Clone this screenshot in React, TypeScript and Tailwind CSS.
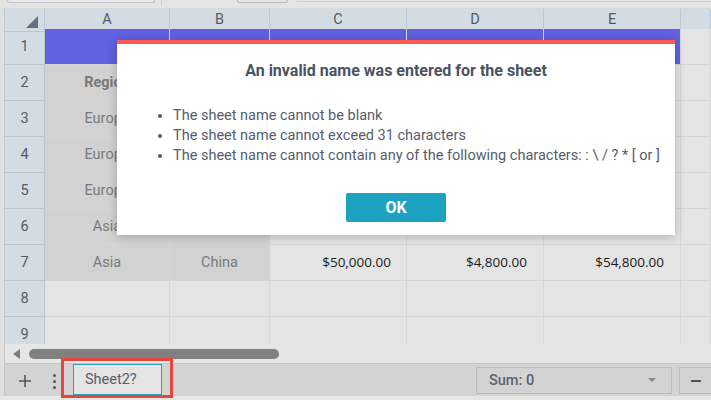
import React from "react";

const cols = ["A", "B", "C", "D", "E", ""];

type Cell = { t?: string; cls?: string; num?: boolean };

const rows: Cell[][] = [
  [{}, {}, {}, {}, {}, {}],
  [{ t: "Region", cls: "font-bold text-[#7a7a7a] justify-center" }, {}, {}, {}, {}, {}],
  [{ t: "Europe", cls: "text-[#7a7a7a] justify-center" }, {}, {}, {}, {}, {}],
  [{ t: "Europe", cls: "text-[#7a7a7a] justify-center" }, {}, {}, {}, {}, {}],
  [{ t: "Europe", cls: "text-[#7a7a7a] justify-center" }, {}, {}, {}, {}, {}],
  [{ t: "Asia", cls: "text-[#7a7a7a] justify-center" }, {}, {}, {}, {}, {}],
  [
    { t: "Asia", cls: "text-[#7a7a7a] justify-center" },
    { t: "China", cls: "text-[#7a7a7a] justify-center" },
    { t: "$50,000.00", cls: "justify-end pr-[15px] text-[#1a1a1a]", num: true },
    { t: "$4,800.00", cls: "justify-end pr-[16px] text-[#1a1a1a]", num: true },
    { t: "$54,800.00", cls: "justify-end pr-[16px] text-[#1a1a1a]", num: true },
    {},
  ],
  [{}, {}, {}, {}, {}, {}],
  [{}, {}, {}, {}, {}, {}],
];

function cellBg(r: number, c: number) {
  if (r === 0 && c < 5) return "bg-[#6161e1]";
  if (r >= 1 && r <= 6 && c < 2) return "bg-[#d2d2d2]";
  return "bg-[#e4e4e4]";
}

export default function App() {
  return (
    <div
      className="relative w-[711px] h-[400px] overflow-hidden bg-[#e4e4e4] text-[14.5px]"
      style={{ fontFamily: "Roboto, 'Noto Sans', sans-serif" }}
    >
      {/* top strip (formula bar remnants) */}
      <div className="h-[8px] flex items-start bg-[#e4e4e4]">
        <div className="ml-[7px] w-[148px] h-[3px] border-b border-x border-[#c4c4cc] rounded-b-[3px] bg-[#e8e8e8]" />
        <div className="ml-[6px] w-px h-[6px] bg-[#cfcfcf]" />
        <div className="ml-[75px] w-[51px] h-[3px] border-b border-x border-[#bdbdbd] rounded-b-[3px]" />
        <div className="ml-[9px] flex-1 h-[2px] border-b border-[#d0d0d0]" />
      </div>

      <div className="flex">
        <div className="w-[5px] bg-[#e0e0e0] border-r border-[#c9c9c9]" />
        <div className="flex-1 min-w-0">
          {/* column header */}
          <div className="grid grid-cols-[40px_125px_100px_137px_137px_137px_1fr] h-[21px] border-t border-[#d8d8d8]">
            <div className="relative bg-[#d3dce3] border-r border-b border-[#b8c9d4]">
              <svg className="absolute right-[6px] bottom-[3px]" width="12" height="12" viewBox="0 0 12 12">
                <polygon points="12,0 12,12 0,12" fill="#66707a" />
              </svg>
            </div>
            {cols.map((c, i) => (
              <div
                key={i}
                className="bg-[#d3dce3] border-r border-b border-[#b8c9d4] flex items-center justify-center text-[#555b63] text-[14.5px]"
              >
                {c}
              </div>
            ))}
          </div>
          {/* body */}
          <div className="h-[315px] overflow-hidden">
            {rows.map((row, r) => (
              <div key={r} className="grid grid-cols-[40px_125px_100px_137px_137px_137px_1fr] h-[36px]">
                <div className="bg-[#d3dce3] border-r border-b border-[#b8c9d4] flex items-center justify-center text-[#555b63]">
                  {r + 1}
                </div>
                {row.map((cell, c) => (
                  <div
                    key={c}
                    className={`${cellBg(r, c)} border-r border-b border-[#d6d6d6] flex items-center overflow-hidden whitespace-nowrap ${cell.cls ?? ""}`}
                    style={
                      cell.num
                        ? { fontFamily: "'Open Sans', 'DejaVu Sans', sans-serif", fontSize: "13.5px" }
                        : undefined
                    }
                  >
                    {cell.t}
                  </div>
                ))}
              </div>
            ))}
          </div>
          {/* scrollbar */}
          <div className="h-[19px] bg-[#e6e6e6] flex items-center">
            <svg className="ml-[8px]" width="7" height="10" viewBox="0 0 7 10">
              <polygon points="7,0 7,10 0,5" fill="#7b7b7b" />
            </svg>
            <div className="ml-[9px] w-[250px] h-[10px] rounded-full bg-[#808080]" />
          </div>
          {/* bottom bar */}
          <div className="h-[33px] bg-[#d3d3d3] border-t border-[#c6c6c6] flex items-start">
            <svg className="ml-[14px] mt-[11px]" width="12" height="12" viewBox="0 0 12 12">
              <path d="M6 0 V12 M0 6 H12" stroke="#555" strokeWidth="1.6" />
            </svg>
            <div className="ml-[22px] mt-[10px] flex flex-col gap-[3px]">
              <div className="w-[3px] h-[3px] rounded-full bg-[#555]" />
              <div className="w-[3px] h-[3px] rounded-full bg-[#555]" />
              <div className="w-[3px] h-[3px] rounded-full bg-[#555]" />
            </div>
            <div className="ml-[17px] relative w-[89px] h-[31px] border border-[#2a9fb7] bg-[#e4e4e4] flex items-center pl-[11px] text-[#555e6b] text-[14.5px]">
              Sheet2?
              <div className="absolute -left-[13px] -right-[12px] -top-[7px] -bottom-[4px] border-[3px] border-[#e6473d]" />
            </div>
            <div className="ml-auto mr-[7px] mt-[3px] w-[196px] h-[27px] border border-[#bcbcbc] bg-[#d3d3d3] flex items-center px-[12px] text-[#5a6270]">
              <span className="font-medium">Sum: 0</span>
              <svg className="ml-auto mr-[3px]" width="8" height="5" viewBox="0 0 8 5">
                <polygon points="0,0 8,0 4,4" fill="#888" />
              </svg>
            </div>
            <div className="mt-[3px] w-[32px] h-[27px] border-l border-y border-[#bcbcbc] bg-[#d3d3d3] flex items-center justify-center">
              <div className="w-[10px] h-[2px] bg-[#555]" />
            </div>
          </div>
        </div>
      </div>
      <div className="h-[4px] bg-[#e6e6e6]" />

      {/* modal */}
      <div className="absolute left-[117px] top-[40px] w-[558px] h-[195px] bg-white shadow-[0_2px_10px_rgba(0,0,0,0.22)] flex flex-col">
        <div className="h-[4px] bg-[#fe5b4c]" />
        <div className="pt-[15px] text-center font-bold text-[16px] leading-[24px] text-[#4b5361]">
          An invalid name was entered for the sheet
        </div>
        <ul className="mt-[23px] pl-[56px] list-disc text-[14.5px] leading-[20px] text-[#555d6b] marker:text-[#555d6b]">
          <li>The sheet name cannot be blank</li>
          <li>The sheet name cannot exceed 31 characters</li>
          <li>The sheet name cannot contain any of the following characters: : \ / ? * [ or ]</li>
        </ul>
        <div className="mt-auto mb-[13px] flex justify-center">
          <div className="w-[100px] h-[29px] bg-[#1ea2c1] rounded-[2px] flex items-center justify-center text-white font-bold text-[16px]">
            OK
          </div>
        </div>
      </div>
    </div>
  );
}
